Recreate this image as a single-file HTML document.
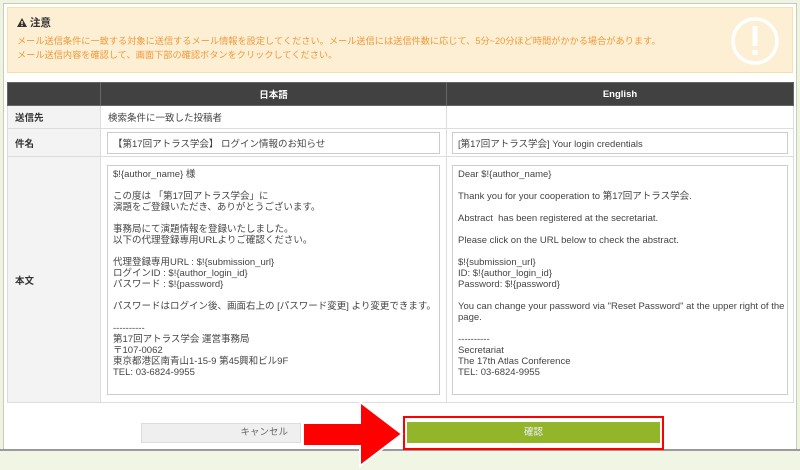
<!DOCTYPE html>
<html><head><meta charset="utf-8"><style>
*{box-sizing:border-box;margin:0;padding:0}
body{width:800px;height:470px;overflow:hidden;background:#eef3e2;font-family:"Liberation Sans","Noto Sans CJK JP",sans-serif;position:relative}
.page{position:absolute;left:3px;top:3px;width:794px;height:447px;background:#fff;border:1px solid #c8ccb8}
.bottom{position:absolute;left:0;top:449px;width:800px;height:21px;background:#f1f6e4;border-top:2px solid #9a9a9a}
.notice{position:absolute;left:7px;top:7px;width:786px;height:66px;background:#fdefd3;border:1px solid #f8dfae}
.notice .t{position:absolute;left:9px;top:7px;font-size:10.5px;font-weight:bold;color:#333}
.notice .m{position:absolute;left:9px;top:26px;font-size:9.2px;line-height:14px;color:#f0993a;white-space:nowrap}
table{position:absolute;left:7px;top:82px;width:786px;border-collapse:collapse;table-layout:fixed;font-size:9.5px;color:#444}
td,th{border:1px solid #ddd}
th{background:#414141;color:#fff;height:23px;font-size:9.5px;border-color:#666}
td.l{background:#f3f3f3;font-weight:bold;padding-left:7px;color:#333}
.box{border:1px solid #ccc;background:#fff;color:#444;font-size:9.5px;white-space:pre;padding:3px 5px;overflow:hidden}
.ta{line-height:11px;height:230px;padding:3px 5px;position:relative}
</style></head><body>
<div class="page"></div>
<div class="bottom"></div>
<div class="notice">
<div class="t"><svg width="10" height="9" style="vertical-align:-1px"><polygon points="5,0 10,9 0,9" fill="#333"/><rect x="4.3" y="3" width="1.4" height="3" fill="#fdefd3"/><rect x="4.3" y="6.8" width="1.4" height="1.2" fill="#fdefd3"/></svg> 注意</div>
<div class="m">メール送信条件に一致する対象に送信するメール情報を設定してください。メール送信には送信件数に応じて、5分~20分ほど時間がかかる場合があります。<br>メール送信内容を確認して、画面下部の確認ボタンをクリックしてください。</div>
<svg style="position:absolute;left:722px;top:8px" width="50" height="50"><circle cx="25" cy="25" r="22" fill="none" stroke="#fff" stroke-width="3.5"/><rect x="22.5" y="10" width="5" height="20" fill="#fff"/><rect x="22.5" y="34" width="5" height="5" fill="#fff"/></svg>
</div>
<table>
<colgroup><col style="width:93px"><col style="width:346px"><col style="width:347px"></colgroup>
<tr><th></th><th>日本語</th><th>English</th></tr>
<tr style="height:23px"><td class="l">送信先</td><td style="padding-left:7px">検索条件に一致した投稿者</td><td></td></tr>
<tr style="height:28px"><td class="l">件名</td><td style="padding:0 6px"><div class="box">【第17回アトラス学会】 ログイン情報のお知らせ</div></td><td style="padding:0 5px"><div class="box">[第17回アトラス学会] Your login credentials</div></td></tr>
<tr style="height:246px"><td class="l">本文</td><td style="padding:0 6px"><div class="box ta">$!{author_name} 様

この度は 「第17回アトラス学会」に
演題をご登録いただき、ありがとうございます。

事務局にて演題情報を登録いたしました。
以下の代理登録専用URLよりご確認ください。

代理登録専用URL : $!{submission_url}
ログインID : $!{author_login_id}
パスワード : $!{password}

パスワードはログイン後、画面右上の [パスワード変更] より変更できます。

----------
第17回アトラス学会 運営事務局
〒107-0062
東京都港区南青山1-15-9 第45興和ビル9F
TEL: 03-6824-9955</div></td><td style="padding:0 5px"><div class="box ta">Dear $!{author_name}

Thank you for your cooperation to 第17回アトラス学会.

Abstract  has been registered at the secretariat.

Please click on the URL below to check the abstract.

$!{submission_url}
ID: $!{author_login_id}
Password: $!{password}

You can change your password via "Reset Password" at the upper right of the
page.

----------
Secretariat
The 17th Atlas Conference
TEL: 03-6824-9955</div></td></tr>
</table>
<div style="position:absolute;left:141px;top:423px;width:160px;height:20px;background:#efefef;border:1px solid #ddd;font-size:9.5px;color:#666;text-align:right;padding-right:12px;line-height:18px">キャンセル</div>
<div style="position:absolute;left:403px;top:416px;width:261px;height:34px;border:2px solid #f00;background:#fff"></div>
<div style="position:absolute;left:407px;top:422px;width:253px;height:21px;background:#93b52a;color:#eef;font-size:9.5px;text-align:center;line-height:21px">確認</div>
<svg style="position:absolute;left:300px;top:399px" width="106" height="70"><polygon points="3,24 60,24 60,3 102,35 60,67 60,47 3,47" fill="#f00" stroke="#fff" stroke-width="2" stroke-linejoin="miter"/></svg>
</body></html>
